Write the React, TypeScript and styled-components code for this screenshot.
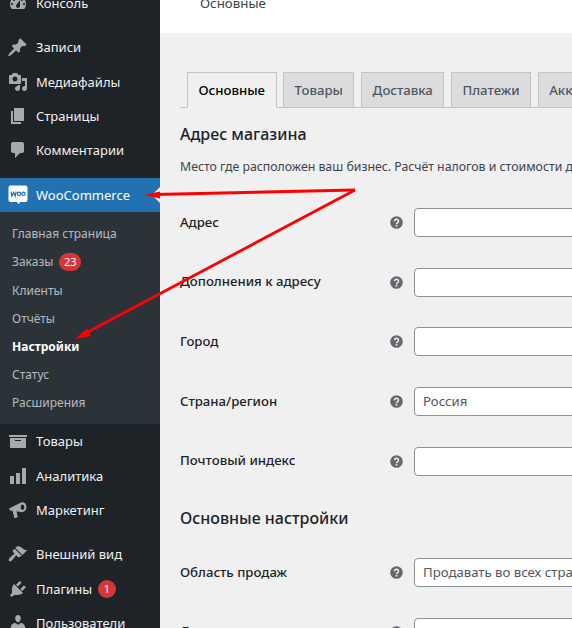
import React from 'react'
import styled, { createGlobalStyle } from 'styled-components'

const GlobalStyle = createGlobalStyle`
  html, body {
    margin: 0;
    padding: 0;
    overflow: hidden;
    background: #f0f0f1;
  }
  * {
    box-sizing: border-box;
  }
`

const Page = styled.div`
  position: relative;
  display: flex;
  width: 572px;
  height: 628px;
  overflow: hidden;
  font-family: 'Noto Sans', 'Open Sans', sans-serif;
  font-size: 13px;
`

const Sidebar = styled.nav`
  flex: 0 0 160px;
  background: #1d2327;
  margin-top: -14px;
  height: 660px;
`

const MenuGroup = styled.div<{ $gap?: number }>`
  margin-bottom: ${(p) => p.$gap ?? 0}px;
`

const MenuRow = styled.div<{ $active?: boolean }>`
  position: relative;
  display: flex;
  align-items: center;
  height: 34.33px;
  padding-left: 8px;
  gap: 8px;
  background: ${(p) => (p.$active ? '#2271b1' : 'transparent')};
  color: ${(p) => (p.$active ? '#fff' : '#f0f0f1')};
  ${(p) =>
    p.$active &&
    `
    &::after {
      content: '';
      position: absolute;
      right: 0;
      top: 50%;
      margin-top: -8px;
      border: 8px solid transparent;
      border-right-color: #f0f0f1;
      border-left-width: 0;
    }
  `}
`

const MenuText = styled.span`
  display: flex;
  align-items: center;
`

const IconBox = styled.span`
  flex: 0 0 20px;
  width: 20px;
  height: 20px;
  color: #a7aaad;
  display: flex;
  align-items: center;
  justify-content: center;
`

const Badge = styled.span`
  display: inline-flex;
  align-items: center;
  justify-content: center;
  min-width: 18px;
  height: 18px;
  padding: 0 4.500px;
  margin-left: 6px;
  border-radius: 9px;
  background: #d63638;
  color: #fff;
  font-size: 11px;
`

const Submenu = styled.div`
  background: #2c3338;
  padding: 7.600px 0 7.400px;
`

const SubRow = styled.div<{ $current?: boolean }>`
  display: flex;
  align-items: center;
  height: 28.200px;
  padding-left: 12px;
  font-size: 12px;
  color: ${(p) => (p.$current ? '#fff' : 'rgba(240, 246, 252, 0.7)')};
  font-weight: ${(p) => (p.$current ? 700 : 400)};
`

const Main = styled.main`
  flex: 1;
  min-width: 0;
`

const TopBar = styled.div`
  height: 33px;
  background: #fff;
  padding-left: 40px;
  color: #3c434a;
  font-size: 13.300px;
  line-height: 6px;
  overflow: hidden;
`

const Content = styled.div`
  padding: 39px 0 0 20px;
  width: 560px;
`

const Tabs = styled.div`
  display: flex;
  gap: 6.600px;
  height: 36px;
  padding-left: 7px;
  border-bottom: 1px solid #c3c4c7;
`

const Tab = styled.div<{ $active?: boolean }>`
  height: 36px;
  flex: none;
  display: flex;
  align-items: center;
  padding: 0 10.500px;
  font-size: 13.200px;
  font-weight: 500;
  border: 1px solid #c3c4c7;
  border-bottom: ${(p) => (p.$active ? '1px solid #f0f0f1' : '1px solid #c3c4c7')};
  background: ${(p) => (p.$active ? '#f0f0f1' : '#dcdcde')};
  color: ${(p) => (p.$active ? '#000' : '#50575e')};
`

const SectionTitle = styled.h2<{ $top: number; $bottom: number }>`
  margin: ${(p) => p.$top}px 0 ${(p) => p.$bottom}px;
  font-size: 16px;
  font-weight: 500;
  line-height: 22px;
  color: #1d2327;
`

const Description = styled.p`
  margin: 0 0 17px;
  font-size: 12.300px;
  line-height: 18px;
  color: #3c434a;
  white-space: nowrap;
`

const FormRow = styled.div`
  display: flex;
  align-items: center;
  height: 59.600px;
`

const Label = styled.label`
  flex: 0 0 210px;
  font-size: 13.200px;
  font-weight: 500;
  color: #1d2327;
  margin-top: -2px;
`

const Help = styled.span`
  flex: 0 0 24px;
  width: 13px;
  height: 13px;
  display: flex;
  color: #646970;
`

const Field = styled.div`
  flex: none;
  width: 300px;
  height: 29px;
  background: #fff;
  border: 1px solid #8c8f94;
  border-radius: 4px;
  padding: 0 8px;
  font-size: 13.200px;
  line-height: 27px;
  color: #50575e;
  white-space: nowrap;
`

const Arrows = styled.svg`
  position: absolute;
  left: 0;
  top: 0;
  pointer-events: none;
`

const icons: Record<string, React.ReactNode> = {
  dashboard: (
    <path d="M3.760 16h12.480c1.100-1.430 1.760-3.140 1.760-5 0-4.420-3.580-8-8-8s-8 3.580-8 8c0 1.860.66 3.570 1.760 5zM10 4c.55 0 1 .45 1 1s-.45 1-1 1-1-.45-1-1 .45-1 1-1zM6 6c.55 0 1 .45 1 1s-.45 1-1 1-1-.45-1-1 .45-1 1-1zm8 0c.55 0 1 .45 1 1s-.45 1-1 1-1-.45-1-1 .45-1 1-1zm-5.370 5.550L12 7v6c0 1.100-.9 2-2 2s-2-.9-2-2c0-.57.24-1.080.63-1.450zM4 10c.55 0 1 .45 1 1s-.45 1-1 1-1-.45-1-1 .45-1 1-1zm12 0c.55 0 1 .45 1 1s-.45 1-1 1-1-.45-1-1 .45-1 1-1z" />
  ),
  pin: (
    <path d="M10.440 3.020l1.820-1.820 6.360 6.350-1.830 1.820c-1.050-.68-2.480-.57-3.410.36l-.75.75c-.92.93-1.040 2.350-.35 3.410l-1.830 1.820-2.410-2.410-2.890 2.890c-1.530 1.530-4.450 3.480-4.890 3.030-.45-.44 1.500-3.360 3.030-4.890l2.890-2.890-2.400-2.400 1.820-1.830c1.060.68 2.480.56 3.410-.36l.75-.75c.93-.93 1.040-2.350.36-3.410z" />
  ),
  media: (
    <path d="M13 11V4c0-.55-.45-1-1-1h-1.670L9 1H5L3.670 3H2c-.55 0-1 .45-1 1v7c0 .55.45 1 1 1h10c.55 0 1-.45 1-1zM7 4.500c1.380 0 2.500 1.120 2.500 2.500S8.380 9.500 7 9.500 4.500 8.380 4.500 7 5.620 4.500 7 4.500zM14 6h5v10.500c0 1.380-1.120 2.500-2.500 2.500S14 17.880 14 16.500s1.120-2.500 2.500-2.500c.17 0 .34.02.5.05V9h-3V6zm-4 8.050V13h2v3.500c0 1.380-1.120 2.500-2.500 2.500S7 17.880 7 16.500 8.120 14 9.500 14c.17 0 .34.02.5.05z" />
  ),
  pages: <path d="M6 15V2h10v13H6zm-1 1h8v2H3V5h2v11z" />,
  comment: (
    <path d="M5 2h9c1.100 0 2 .9 2 2v7c0 1.100-.9 2-2 2h-2l-5 5v-5H5c-1.100 0-2-.9-2-2V4c0-1.100.9-2 2-2z" />
  ),
  box: <path d="M19 4v2H1V4h18zM2 7h16v10H2V7zm11 3V9H7v1h6z" fillRule="evenodd" />,
  chart: <path d="M18 18V2h-4v16h4zm-6 0V7H8v11h4zm-6 0v-8H2v8h4z" />,
  megaphone: (
    <path
      d="M1 8.500L13 2.500c2.500-1.200 5.500 1 5.500 4.500S15.500 12.800 13 12l-4.500-.8 1.300 6-3.300 1-2-7.500-2.500-.2zM14.500 4.500c-1 0-1.800 1.200-1.800 2.700s.8 2.700 1.800 2.700 1.800-1.200 1.800-2.700-.8-2.700-1.800-2.700z"
      fillRule="evenodd"
    />
  ),
  brush: (
    <path d="M14.480 11.060L7.410 3.990l1.500-1.500c.5-.56 2.300-.47 3.510.32 1.210.8 1.430 1.280 2.910 2.100 1.180.64 2.450 1.260 4.230.91zm-.71.71L6.700 4.700 4.930 6.470c-.39.39-.39 1.020 0 1.410l1.060 1.060c.39.39.39 1.030 0 1.420-.6.600-1.430 1.110-2.210 1.690-.35.26-.7.53-1.010.84C1.430 13.730 0 15.900 1 16.900s3.170-.43 4.010-1.770c.31-.310.58-.66.840-1.010.58-.78 1.090-1.610 1.690-2.210.39-.39 1.020-.39 1.410 0l1.060 1.060c.39.39 1.020.39 1.410 0z" />
  ),
  plug: (
    <path d="M13.110 4.360L9.870 7.600 8 5.730l3.240-3.240c.35-.34 1.050-.2 1.560.32.52.51.66 1.210.31 1.550zm-8 1.770l.91-1.120 9.010 9.010-1.190.84c-.71.71-2.630 1.160-3.820 1.160H6.140L4.900 17.260c-.59.59-1.540.59-2.120 0-.59-.58-.59-1.530 0-2.120l1.240-1.240v-3.880c0-1.130.4-3.070 1.090-3.890zm7.260 3.970l3.240-3.240c.34-.35 1.040-.21 1.550.31.52.51.66 1.210.31 1.550l-3.240 3.250z" />
  ),
  user: (
    <path d="M10 9.250c-2.270 0-2.730-3.440-2.730-3.440C7 4.020 7.820 2 9.970 2c2.160 0 2.980 2.020 2.710 3.810 0 0-.41 3.440-2.680 3.440zm0 2.570L12.720 10c2.390 0 4.520 2.330 4.520 4.530v2.490s-3.650 1.130-7.240 1.130c-3.650 0-7.240-1.130-7.240-1.130v-2.490c0-2.250 1.940-4.530 4.430-4.530z" />
  ),
}

const MenuIcon = ({ name }: { name: string }) => (
  <IconBox>
    <svg width="20" height="20" viewBox="0 0 20 20" fill="currentColor">
      {icons[name]}
    </svg>
  </IconBox>
)

const WooIcon = () => (
  <IconBox>
    <svg width="20" height="20" viewBox="0 0 20 20">
      <path
        d="M2.500 .5h15a2 2 0 0 1 2 2v12.500a2 2 0 0 1-2 2h-5l-2 2-1.500-2h-6.500a2 2 0 0 1-2-2V2.500a2 2 0 0 1 2-2z"
        fill="#fff"
      />
      <path d="M3 6.500l1 4.500 1.600-3.500L7.200 11l1-4.500" fill="none" stroke="#2271b1" strokeWidth="1.200" />
      <circle cx="11" cy="8.800" r="1.700" fill="none" stroke="#2271b1" strokeWidth="1.200" />
      <circle cx="15.500" cy="8.800" r="1.700" fill="none" stroke="#2271b1" strokeWidth="1.200" />
    </svg>
  </IconBox>
)

const HelpIcon = () => (
  <Help>
    <svg width="13" height="13" viewBox="0 0 13 13">
      <circle cx="6.500" cy="6.500" r="6.300" fill="currentColor" />
      <path
        d="M4.500 5.200a2 1.900 0 1 1 3 1.600c-.7.4-1 .7-1 1.400"
        fill="none"
        stroke="#f0f0f1"
        strokeWidth="1.500"
      />
      <rect x="5.700" y="9" width="1.600" height="1.600" fill="#f0f0f1" />
    </svg>
  </Help>
)

const fields = [
  { label: 'Адрес', value: '' },
  { label: 'Дополнения к адресу', value: '' },
  { label: 'Город', value: '' },
  { label: 'Страна/регион', value: 'Россия' },
  { label: 'Почтовый индекс', value: '' },
]

const App = () => {
  return (
    <Page>
      <GlobalStyle />
      <Sidebar>
        <MenuGroup $gap={10}>
          <MenuRow>
            <MenuIcon name="dashboard" />
            <MenuText>Консоль</MenuText>
          </MenuRow>
        </MenuGroup>
        <MenuGroup $gap={10}>
          <MenuRow>
            <MenuIcon name="pin" />
            <MenuText>Записи</MenuText>
          </MenuRow>
          <MenuRow>
            <MenuIcon name="media" />
            <MenuText>Медиафайлы</MenuText>
          </MenuRow>
          <MenuRow>
            <MenuIcon name="pages" />
            <MenuText>Страницы</MenuText>
          </MenuRow>
          <MenuRow>
            <MenuIcon name="comment" />
            <MenuText>Комментарии</MenuText>
          </MenuRow>
        </MenuGroup>
        <MenuRow $active>
          <WooIcon />
          <MenuText>WooCommerce</MenuText>
        </MenuRow>
        <Submenu>
          <SubRow>Главная страница</SubRow>
          <SubRow>
            Заказы
            <Badge>23</Badge>
          </SubRow>
          <SubRow>Клиенты</SubRow>
          <SubRow>Отчёты</SubRow>
          <SubRow $current>Настройки</SubRow>
          <SubRow>Статус</SubRow>
          <SubRow>Расширения</SubRow>
        </Submenu>
        <MenuGroup $gap={10}>
          <MenuRow>
            <MenuIcon name="box" />
            <MenuText>Товары</MenuText>
          </MenuRow>
          <MenuRow>
            <MenuIcon name="chart" />
            <MenuText>Аналитика</MenuText>
          </MenuRow>
          <MenuRow>
            <MenuIcon name="megaphone" />
            <MenuText>Маркетинг</MenuText>
          </MenuRow>
        </MenuGroup>
        <MenuRow>
          <MenuIcon name="brush" />
          <MenuText>Внешний вид</MenuText>
        </MenuRow>
        <MenuRow>
          <MenuIcon name="plug" />
          <MenuText>
            Плагины
            <Badge>1</Badge>
          </MenuText>
        </MenuRow>
        <MenuRow>
          <MenuIcon name="user" />
          <MenuText>Пользователи</MenuText>
        </MenuRow>
      </Sidebar>
      <Main>
        <TopBar>Основные</TopBar>
        <Content>
          <Tabs>
            <Tab $active>Основные</Tab>
            <Tab>Товары</Tab>
            <Tab>Доставка</Tab>
            <Tab>Платежи</Tab>
            <Tab>Аккаунты</Tab>
          </Tabs>
          <SectionTitle $top={15} $bottom={13}>
            Адрес магазина
          </SectionTitle>
          <Description>
            Место где расположен ваш бизнес. Расчёт налогов и стоимости доставки будет основан на этом адресе.
          </Description>
          {fields.map((f) => (
            <FormRow key={f.label}>
              <Label>{f.label}</Label>
              <HelpIcon />
              <Field>{f.value}</Field>
            </FormRow>
          ))}
          <SectionTitle $top={16} $bottom={14}>
            Основные настройки
          </SectionTitle>
          <FormRow>
            <Label>Область продаж</Label>
            <HelpIcon />
            <Field>Продавать во всех странах</Field>
          </FormRow>
          <FormRow>
            <Label>Доставка</Label>
            <HelpIcon />
            <Field>Доставка</Field>
          </FormRow>
        </Content>
      </Main>
      <Arrows width="572" height="628" viewBox="0 0 572 628">
        <path d="M355 190 L155 194.500" stroke="#f00" strokeWidth="2.800" fill="none" />
        <path d="M355 190 L85 333.500" stroke="#f00" strokeWidth="2.800" fill="none" />
        <path d="M144 195 L160 191.500 L160 198.500 Z" fill="#f00" />
        <path d="M75 339 L87 328.500 L91 336 Z" fill="#f00" />
      </Arrows>
    </Page>
  )
}

export default App
